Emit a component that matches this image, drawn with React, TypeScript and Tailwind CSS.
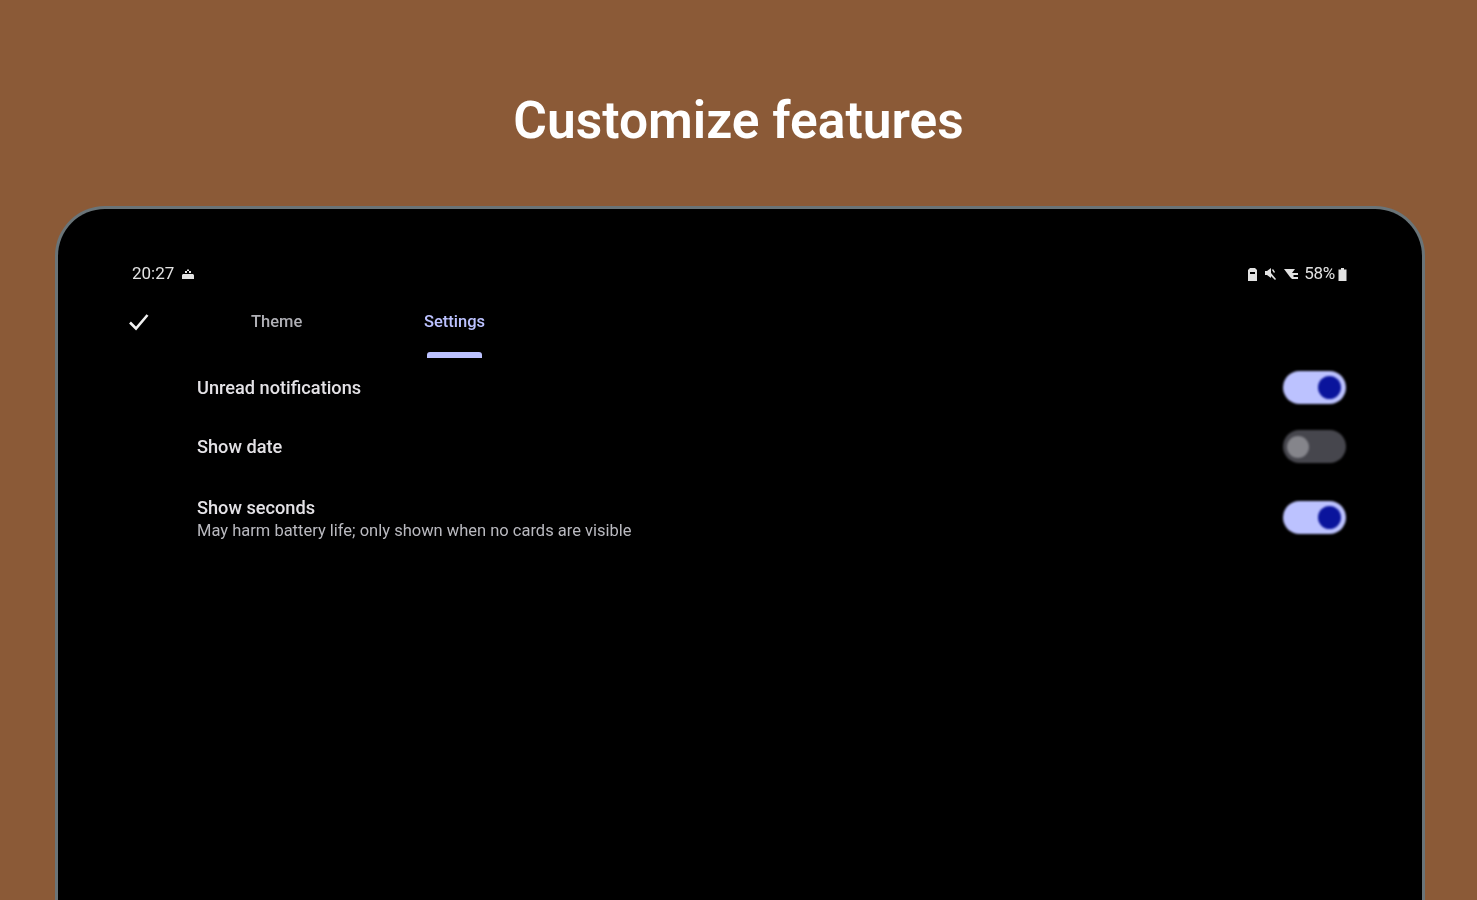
import React from "react";

const sans = "font-['Roboto','Liberation_Sans',sans-serif]";

const Toggle = ({ on, className = "" }: { on: boolean; className?: string }) => (
  <div
    className={`flex h-[33px] w-[63px] items-center rounded-full blur-[0.8px] ${
      on ? "justify-end bg-[#bcc2ff] px-[5px]" : "justify-start bg-[#46464d] pl-[4px]"
    } ${className}`}
  >
    {on ? (
      <div className="h-[23px] w-[23px] rounded-full bg-[#0a149c]" />
    ) : (
      <div className="h-[22px] w-[22px] rounded-full bg-[#85858b]" />
    )}
  </div>
);

const Row = ({
  title,
  sub,
  on,
  className,
  toggleClass,
}: {
  title: string;
  sub?: string;
  on: boolean;
  className: string;
  toggleClass?: string;
}) => (
  <div className={`flex items-center justify-between ${className}`}>
    <div className="blur-[0.7px]">
      <div className="text-[18.2px] leading-[24px] font-medium text-[#e4e2e6]">
        {title}
      </div>
      {sub && (
        <div className="text-[16.5px] leading-[22px] text-[#b9b9bf]">{sub}</div>
      )}
    </div>
    <Toggle on={on} className={toggleClass} />
  </div>
);

export default function App() {
  return (
    <div
      className={`flex h-[900px] w-full flex-col overflow-hidden bg-[#8b5a37] ${sans}`}
    >
      <h1 className="pt-[89px] pb-[53px] text-center text-[51.5px] leading-[64px] font-semibold text-white blur-[0.6px]">
        Customize features
      </h1>

      <div className="mr-[52px] ml-[55px] flex-1 rounded-t-[50px] border-x-[3px] border-t-[3px] border-b-0 border-[#6a7478] bg-black pt-[52px] pr-[76px] pl-[73px]">
        {/* status bar */}
        <div className="mt-px -mr-px flex h-[24px] items-center justify-between pl-px text-[17px] text-[#e2e2e2] blur-[0.7px]">
          <div className="flex items-center gap-[7px]">
            <span>20:27</span>
            <svg width="14" height="12" viewBox="0 0 14 12" fill="currentColor">
              <path d="M1 11V7.500C1 6.500 1.800 6 2.500 6h9c.8 0 1.500.6 1.500 1.500V11zM4 5V3h2v2zM8 5V3h2v2zM6 1.500h2V3H6z" />
            </svg>
          </div>
          <div className="flex items-center gap-[6px]">
            <svg width="11" height="15" viewBox="0 0 11 15" fill="currentColor">
              <path d="M3 1h5l2 2v11H1V3zM3 5v2h5V5z" />
            </svg>
            <svg width="14" height="14" viewBox="0 0 14 14" fill="currentColor">
              <path d="M1 4h2l4-3v5l5 6-1 1-4-4v2L3 8H1zM9 2l2 3-1 1-2-3z" />
            </svg>
            <svg width="17" height="12" viewBox="0 0 17 12" fill="currentColor">
              <path d="M0 1h11L8 5h6v2H9.500v2h4.500v2H8L6 9z" />
            </svg>
            <span className="-ml-[3px] tracking-[-0.3px]">58%</span>
            <svg
              width="9"
              height="13"
              viewBox="0 0 9 13"
              fill="currentColor"
              className="-ml-[3px]"
            >
              <path d="M3 0h3v1.500h2.500V13H.5V1.500H3z" />
            </svg>
          </div>
        </div>

        {/* tabs */}
        <div className="mt-[13px] flex h-[63px] items-start">
          <div className="mt-[12px] -ml-[4px] w-[25px] blur-[0.5px]">
            <svg width="25" height="22" viewBox="0 0 25 22" fill="none">
              <path
                d="M3 11.500l6 6L20.500 4"
                stroke="#f1f1f1"
                strokeWidth="2.600"
              />
            </svg>
          </div>
          <div className="mt-[12px] ml-[99px] w-[50px] text-center text-[16.5px] leading-[22px] font-medium text-[#b0b0b6] blur-[0.7px]">
            Theme
          </div>
          <div className="ml-[123px] flex w-[61px] flex-col items-center">
            <div className="mt-[12px] text-[16.5px] leading-[22px] font-medium text-[#bcc2ff] blur-[0.7px]">
              Settings
            </div>
            <div className="mt-[19px] h-[6px] w-[55px] rounded-t-[3px] bg-[#bcc2ff] blur-[0.6px]" />
          </div>
        </div>

        {/* settings list */}
        <div className="pl-[66px]">
          <Row title="Unread notifications" on className="mt-[9px]" />
          <Row
            title="Show date"
            on={false}
            className="mt-[27px]"
            toggleClass="-mt-px"
          />
          <Row
            title="Show seconds"
            sub="May harm battery life; only shown when no cards are visible"
            on
            className="mt-[33px]"
            toggleClass="-mt-[3px]"
          />
        </div>
      </div>
    </div>
  );
}
